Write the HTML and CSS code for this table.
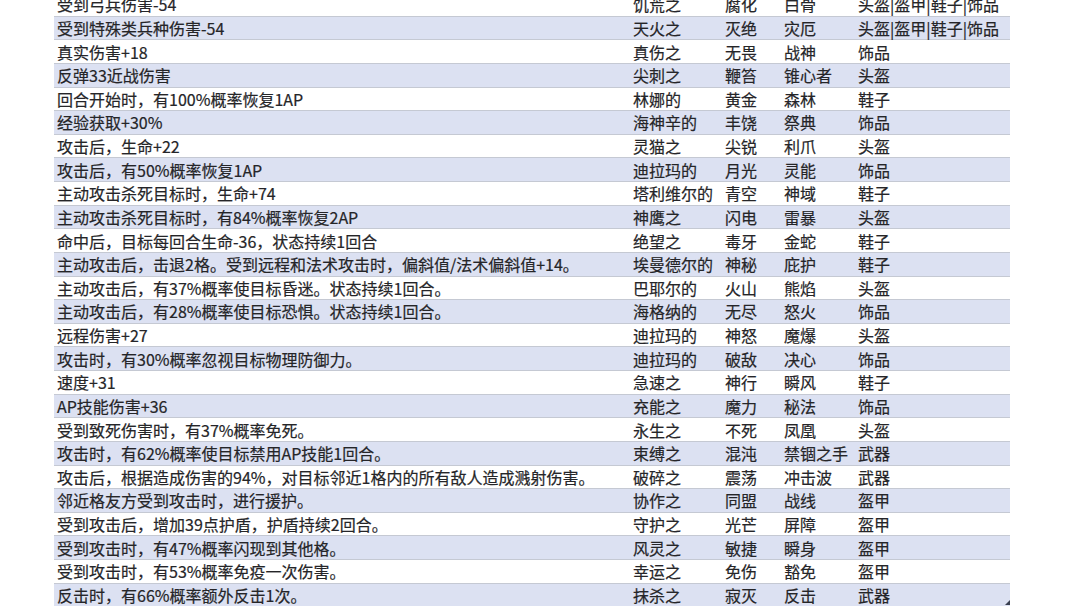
FILE: index.html
```html
<!DOCTYPE html>
<html lang="zh-CN">
<head>
<meta charset="utf-8">
<title>装备词缀表</title>
<link rel="stylesheet" href="styles.css">
</head>
<body>
<div class="sheet">
  <div class="row"><span>受到弓兵伤害-54</span><span>饥荒之</span><span>腐化</span><span>白骨</span><span>头盔|盔甲|鞋子|饰品</span></div>
  <div class="row alt"><span>受到特殊类兵种伤害-54</span><span>天火之</span><span>灭绝</span><span>灾厄</span><span>头盔|盔甲|鞋子|饰品</span></div>
  <div class="row"><span>真实伤害+18</span><span>真伤之</span><span>无畏</span><span>战神</span><span>饰品</span></div>
  <div class="row alt"><span>反弹33近战伤害</span><span>尖刺之</span><span>鞭笞</span><span>锥心者</span><span>头盔</span></div>
  <div class="row"><span>回合开始时，有100%概率恢复1AP</span><span>林娜的</span><span>黄金</span><span>森林</span><span>鞋子</span></div>
  <div class="row alt"><span>经验获取+30%</span><span>海神辛的</span><span>丰饶</span><span>祭典</span><span>饰品</span></div>
  <div class="row"><span>攻击后，生命+22</span><span>灵猫之</span><span>尖锐</span><span>利爪</span><span>头盔</span></div>
  <div class="row alt"><span>攻击后，有50%概率恢复1AP</span><span>迪拉玛的</span><span>月光</span><span>灵能</span><span>饰品</span></div>
  <div class="row"><span>主动攻击杀死目标时，生命+74</span><span>塔利维尔的</span><span>青空</span><span>神域</span><span>鞋子</span></div>
  <div class="row alt"><span>主动攻击杀死目标时，有84%概率恢复2AP</span><span>神鹰之</span><span>闪电</span><span>雷暴</span><span>头盔</span></div>
  <div class="row"><span>命中后，目标每回合生命-36，状态持续1回合</span><span>绝望之</span><span>毒牙</span><span>金蛇</span><span>鞋子</span></div>
  <div class="row alt"><span>主动攻击后，击退2格。受到远程和法术攻击时，偏斜值/法术偏斜值+14。</span><span>埃曼德尔的</span><span>神秘</span><span>庇护</span><span>鞋子</span></div>
  <div class="row"><span>主动攻击后，有37%概率使目标昏迷。状态持续1回合。</span><span>巴耶尔的</span><span>火山</span><span>熊焰</span><span>头盔</span></div>
  <div class="row alt"><span>主动攻击后，有28%概率使目标恐惧。状态持续1回合。</span><span>海格纳的</span><span>无尽</span><span>怒火</span><span>饰品</span></div>
  <div class="row"><span>远程伤害+27</span><span>迪拉玛的</span><span>神怒</span><span>魔爆</span><span>头盔</span></div>
  <div class="row alt"><span>攻击时，有30%概率忽视目标物理防御力。</span><span>迪拉玛的</span><span>破敌</span><span>决心</span><span>饰品</span></div>
  <div class="row"><span>速度+31</span><span>急速之</span><span>神行</span><span>瞬风</span><span>鞋子</span></div>
  <div class="row alt"><span>AP技能伤害+36</span><span>充能之</span><span>魔力</span><span>秘法</span><span>饰品</span></div>
  <div class="row"><span>受到致死伤害时，有37%概率免死。</span><span>永生之</span><span>不死</span><span>凤凰</span><span>头盔</span></div>
  <div class="row alt"><span>攻击时，有62%概率使目标禁用AP技能1回合。</span><span>束缚之</span><span>混沌</span><span>禁锢之手</span><span>武器</span></div>
  <div class="row"><span>攻击后，根据造成伤害的94%，对目标邻近1格内的所有敌人造成溅射伤害。</span><span>破碎之</span><span>震荡</span><span>冲击波</span><span>武器</span></div>
  <div class="row alt"><span>邻近格友方受到攻击时，进行援护。</span><span>协作之</span><span>同盟</span><span>战线</span><span>盔甲</span></div>
  <div class="row"><span>受到攻击后，增加39点护盾，护盾持续2回合。</span><span>守护之</span><span>光芒</span><span>屏障</span><span>盔甲</span></div>
  <div class="row alt"><span>受到攻击时，有47%概率闪现到其他格。</span><span>风灵之</span><span>敏捷</span><span>瞬身</span><span>盔甲</span></div>
  <div class="row"><span>受到攻击时，有53%概率免疫一次伤害。</span><span>幸运之</span><span>免伤</span><span>豁免</span><span>盔甲</span></div>
  <div class="row alt"><span>反击时，有66%概率额外反击1次。</span><span>抹杀之</span><span>寂灭</span><span>反击</span><span>武器</span></div>
</div>
<div class="corner"></div>
</body>
</html>
```
FILE: styles.css
```css
html, body {
  margin: 0;
  padding: 0;
  background: #ffffff;
  overflow: hidden;
}

body {
  width: 1080px;
  height: 606px;
  position: relative;
  font-family: "Noto Sans CJK SC", "Noto Sans", sans-serif;
  font-size: 16px;
  color: #252528;
  -webkit-text-stroke: 0.2px #252528;
}

.sheet {
  margin: -7px 0 0 54px;
  width: 956px;
  display: flex;
  flex-direction: column;
}

.row {
  display: grid;
  grid-template-columns: 576px 92px 59px 74px 155px;
  height: 23.64px;
  box-sizing: border-box;
  align-items: center;
  border-bottom: 1px solid #c5c9d3;
  background: #ffffff;
  line-height: 20px;
}

.row.alt {
  background: #dce1f2;
}

.row span {
  padding-left: 3px;
  white-space: nowrap;
}

.corner {
  position: absolute;
  left: 1005px;
  top: 600px;
  width: 0;
  height: 0;
  border-left: 5px solid transparent;
  border-bottom: 5px solid #3a4050;
}
```
